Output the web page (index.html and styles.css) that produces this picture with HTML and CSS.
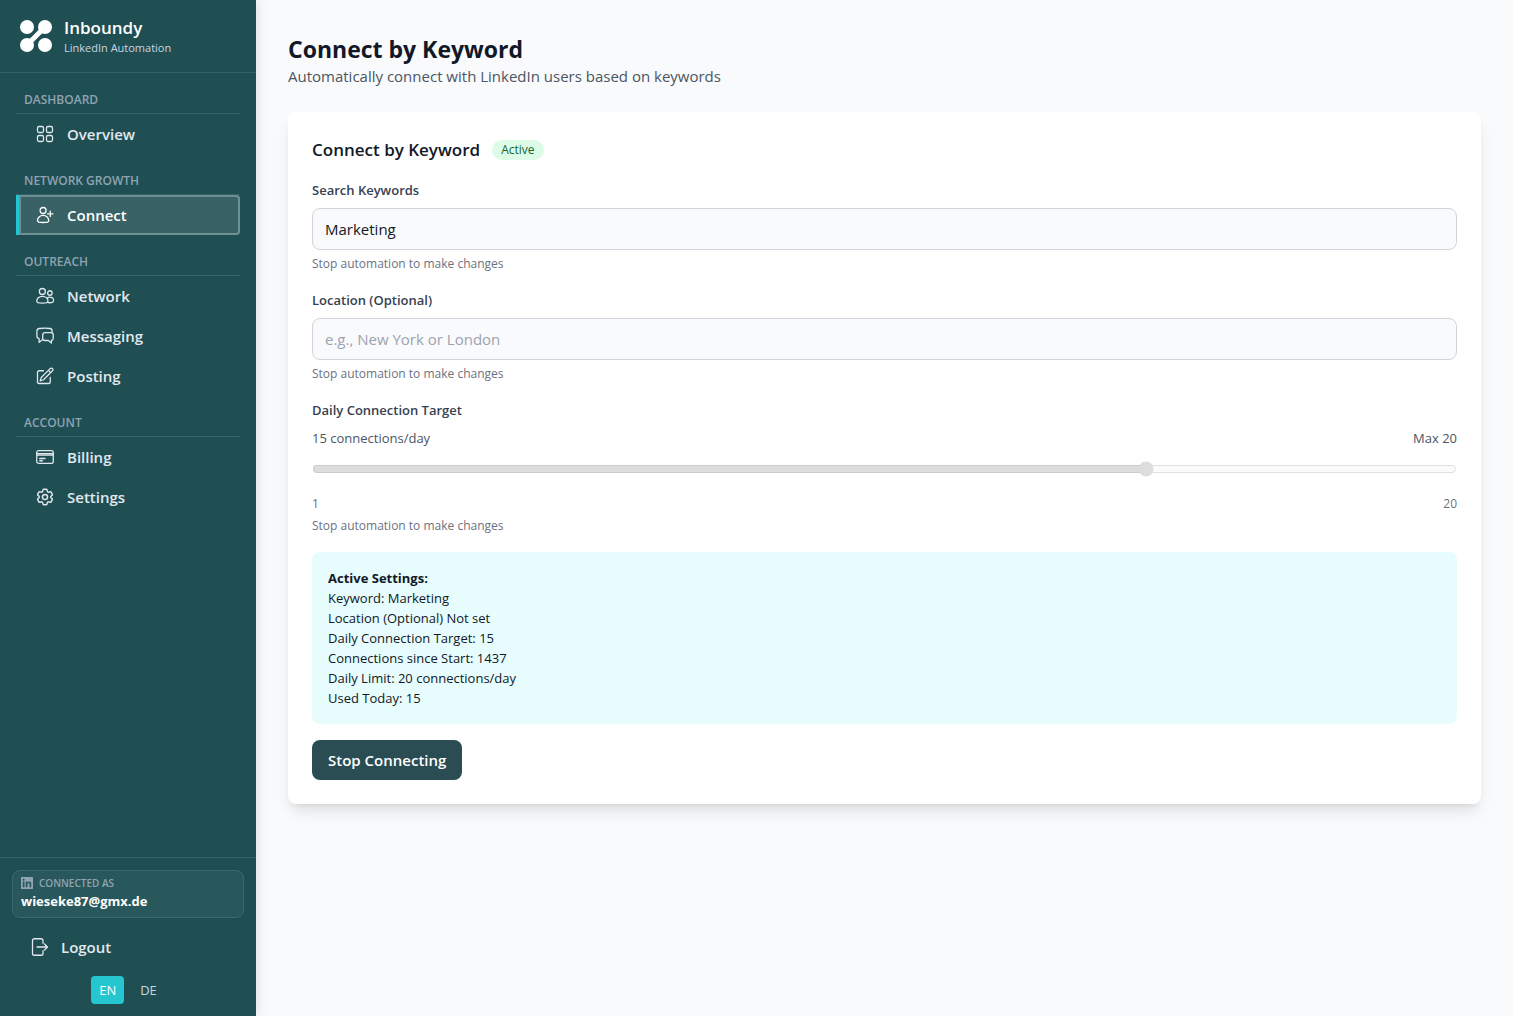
FILE: index.html
```html
<!DOCTYPE html>
<html lang="en">

<head>
  <meta charset="UTF-8">
  <meta name="viewport" content="width=device-width, initial-scale=1.0">
  <title>Inboundy - Connect by Keyword</title>
  <link rel="stylesheet" href="styles.css">
</head>

<body>
  <div class="app">
    <aside class="sidebar">
      <div class="brand">
        <svg class="brand-logo" viewBox="0 0 32 32" aria-hidden="true">
          <circle cx="7" cy="7" r="7" />
          <circle cx="25" cy="7" r="7" />
          <circle cx="7" cy="25" r="7" />
          <circle cx="25" cy="25" r="7" />
          <path d="M7 25 25 7" stroke="#fff" stroke-width="5" />
        </svg>
        <div>
          <div class="brand-name">Inboundy</div>
          <div class="brand-tagline">LinkedIn Automation</div>
        </div>
      </div>

      <!-- Navigation -->
      <nav class="nav">
        <section class="nav-group">
          <h2 class="nav-title">Dashboard</h2>
          <a class="nav-link" href="#overview">
            <svg class="icon" viewBox="0 0 24 24" aria-hidden="true">
              <rect x="2" y="2" width="8" height="8" rx="2" />
              <rect x="14" y="2" width="8" height="8" rx="2" />
              <rect x="2" y="14" width="8" height="8" rx="2" />
              <rect x="14" y="14" width="8" height="8" rx="2" />
            </svg>
            Overview
          </a>
        </section>

        <section class="nav-group">
          <h2 class="nav-title">Network Growth</h2>
          <a class="nav-link active" href="#connect">
            <svg class="icon" viewBox="0 0 24 24" aria-hidden="true">
              <circle cx="9.5" cy="6" r="4" />
              <path d="M9.5 12.5c-4.5 0-7.500 3.500-7.500 7 0 1.500 3 2.500 7.500 2.500s7.500-1 7.500-2.500c0-3.500-3-7-7.500-7z" />
              <path d="M19 7v7M15.500 10.500h7" />
            </svg>
            Connect
          </a>
        </section>

        <section class="nav-group">
          <h2 class="nav-title">Outreach</h2>
          <a class="nav-link" href="#network">
            <svg class="icon" viewBox="0 0 24 24" aria-hidden="true">
              <circle cx="8.500" cy="6" r="4" />
              <circle cx="18.500" cy="8" r="3" />
              <path d="M8.500 12.500c-4.500 0-7.500 3-7.500 6.500 0 1.500 3 2.500 7.500 2.500s7.500-1 7.500-2.500c0-3.500-3-6.500-7.500-6.500z" />
              <path d="M15 15c1-1 2-1.500 3.500-1.500 3 0 5 2 5 4.500 0 2-2.500 3-5 3-1.200 0-2.200-.1-3-.5" />
            </svg>
            Network
          </a>
          <a class="nav-link" href="#messaging">
            <svg class="icon" viewBox="0 0 24 24" aria-hidden="true">
              <path d="M21.500 7V5.500c0-1.800-1.300-3.300-3-3.500a60 60 0 0 0-14 0c-1.900.2-3.300 1.700-3.300 3.500v6.500c0 1.800 1.300 3.200 3 3.500v5l4.300-3.500" />
              <path d="M12 7.500h8c1.700 0 3 1.300 3 3v4.500c0 1.600-1 2.800-2.500 3v3.500L16.500 18H12c-1.700 0-3-1.300-3-3v-4.500c0-1.700 1.300-3 3-3z" />
            </svg>
            Messaging
          </a>
          <a class="nav-link" href="#posting">
            <svg class="icon" viewBox="0 0 24 24" aria-hidden="true">
              <path d="m17.500 3.500 1.500-1.500a2.100 2.100 0 0 1 3 3L10 17l-4.500 1.500L7 14 17.500 3.500zM16.500 4.500l3 3" />
              <path d="M19 14v5.500a2.500 2.500 0 0 1-2.500 2.500h-12A2.500 2.500 0 0 1 2 19.500v-12A2.500 2.500 0 0 1 4.500 5H10" />
            </svg>
            Posting
          </a>
        </section>

        <section class="nav-group">
          <h2 class="nav-title">Account</h2>
          <a class="nav-link" href="#billing">
            <svg class="icon" viewBox="0 0 24 24" aria-hidden="true">
              <rect x="1" y="3.500" width="22" height="17" rx="2.500" />
              <path d="M1 7.500h22M1 9.500h22M5 14h7M5 17h3.500" />
            </svg>
            Billing
          </a>
          <a class="nav-link" href="#settings">
            <svg class="icon" viewBox="1.500 1.500 21 21" aria-hidden="true">
              <path d="M9.594 3.940c.09-.542.56-.94 1.110-.94h2.593c.55 0 1.020.398 1.110.94l.213 1.281c.063.374.313.686.645.87.074.040.147.083.22.127.325.196.72.257 1.075.124l1.217-.456a1.125 1.125 0 0 1 1.370.49l1.296 2.247a1.125 1.125 0 0 1-.26 1.431l-1.003.827c-.293.241-.438.613-.43.992a7.723 7.723 0 0 1 0 .255c-.008.378.137.75.43.991l1.004.827c.424.35.534.955.26 1.430l-1.298 2.247a1.125 1.125 0 0 1-1.369.491l-1.217-.456c-.355-.133-.75-.072-1.076.124a6.470 6.470 0 0 1-.22.128c-.331.183-.581.495-.644.869l-.213 1.281c-.09.543-.56.940-1.110.940h-2.594c-.55 0-1.019-.398-1.110-.94l-.213-1.281c-.062-.374-.312-.686-.644-.87a6.520 6.520 0 0 1-.22-.127c-.325-.196-.72-.257-1.076-.124l-1.217.456a1.125 1.125 0 0 1-1.369-.49l-1.297-2.247a1.125 1.125 0 0 1 .26-1.431l1.004-.827c.292-.24.437-.613.43-.991a6.932 6.932 0 0 1 0-.255c.007-.38-.138-.751-.43-.992l-1.004-.827a1.125 1.125 0 0 1-.26-1.430l1.297-2.247a1.125 1.125 0 0 1 1.370-.491l1.216.456c.356.133.751.072 1.076-.124.072-.044.146-.086.22-.128.332-.183.582-.495.644-.869l.214-1.280z" />
              <circle cx="12" cy="12" r="3" />
            </svg>
            Settings
          </a>
        </section>
      </nav>

      <!-- Account footer -->
      <div class="sidebar-footer">
        <div class="account">
          <div class="account-label">
            <svg class="account-icon" viewBox="0 0 24 24" aria-hidden="true">
              <path fill-rule="evenodd" d="M1 0h22a1 1 0 0 1 1 1v22a1 1 0 0 1-1 1H1a1 1 0 0 1-1-1V1a1 1 0 0 1 1-1zM3.500 9v11.500h3.500V9zM5.300 3.300a2 2 0 1 0 0 4.100 2 2 0 0 0 0-4.100zM9.500 9v11.500H13V15c0-3.700 4-3.500 4 0v5.500h3.500v-7c0-5.500-5.500-5.500-7.500-2.800V9z" />
            </svg>
            Connected as
          </div>
          <div class="account-email">wieseke87@gmx.de</div>
        </div>
        <button class="logout" type="button">
          <svg class="icon" viewBox="0 0 24 24" aria-hidden="true">
            <path d="M16 7V3.500A2.500 2.500 0 0 0 13.500 1h-9A2.500 2.500 0 0 0 2 3.500v17A2.500 2.500 0 0 0 4.500 23h9a2.500 2.500 0 0 0 2.500-2.500V17" />
            <path d="M8 12h14M18 8l4 4-4 4" />
          </svg>
          Logout
        </button>
        <div class="languages">
          <button class="language selected" type="button">EN</button>
          <button class="language" type="button">DE</button>
        </div>
      </div>
    </aside>

    <main class="content">
      <header class="page-header">
        <h1>Connect by Keyword</h1>
        <p>Automatically connect with LinkedIn users based on keywords</p>
      </header>

      <form class="card">
        <div class="card-header">
          <h2>Connect by Keyword</h2>
          <span class="badge">Active</span>
        </div>

        <div class="field">
          <label for="keywords">Search Keywords</label>
          <input class="text-input" id="keywords" type="text" value="Marketing" disabled>
          <p class="hint">Stop automation to make changes</p>
        </div>

        <div class="field">
          <label for="location">Location (Optional)</label>
          <input class="text-input" id="location" type="text" placeholder="e.g., New York or London" disabled>
          <p class="hint">Stop automation to make changes</p>
        </div>

        <div class="field">
          <label for="target">Daily Connection Target</label>
          <div class="range-values">
            <span>15 connections/day</span>
            <span>Max 20</span>
          </div>
          <input class="range" id="target" type="range" min="1" max="20" step="any" value="14.9" disabled>
          <div class="range-limits">
            <span>1</span>
            <span>20</span>
          </div>
          <p class="hint">Stop automation to make changes</p>
        </div>

        <div class="summary">
          <h3>Active Settings:</h3>
          <p>Keyword: Marketing</p>
          <p>Location (Optional) Not set</p>
          <p>Daily Connection Target: 15</p>
          <p>Connections since Start: 1437</p>
          <p>Daily Limit: 20 connections/day</p>
          <p>Used Today: 15</p>
        </div>

        <button class="stop-btn" type="button">Stop Connecting</button>
      </form>
    </main>
  </div>
</body>

</html>
```
FILE: styles.css
```css
* {
  margin: 0;
  padding: 0;
  box-sizing: border-box;
}

body {
  font-family: 'Segoe UI', 'Open Sans', 'Noto Sans', sans-serif;
  font-size: 15px;
  line-height: 24px;
  color: #111827;
  background-color: #f9fafb;
}

button,
input {
  font: inherit;
}

.app {
  display: flex;
  min-height: 100vh;
}

/* Sidebar */
.sidebar {
  display: flex;
  flex-direction: column;
  flex: none;
  width: 256px;
  background-color: #1f4f52;
  box-shadow: 2px 0 10px rgba(0, 0, 0, 0.1);
  color: #e2e8f0;
}

.brand {
  display: flex;
  align-items: center;
  gap: 12px;
  padding: 16px 20px;
  border-bottom: 1px solid #356365;
}

.brand-logo {
  width: 32px;
  height: 32px;
  fill: #fff;
}

.brand-name {
  font-size: 17px;
  font-weight: 600;
  color: #fff;
}

.brand-tagline {
  font-size: 11px;
  line-height: 16px;
  color: #cbd5e1;
}

.nav {
  flex: 1;
  padding: 16px;
}

.nav-group {
  margin-bottom: 16px;
}

.nav-title {
  padding: 1px 8px 3px;
  border-bottom: 1px solid #34646b;
  font-size: 12px;
  font-weight: 600;
  line-height: 20px;
  text-transform: uppercase;
  color: #8fa3b3;
}

.nav-link {
  display: flex;
  align-items: center;
  gap: 13px;
  height: 40px;
  padding: 0 20px;
  font-weight: 600;
  color: #e2e8f0;
  text-decoration: none;
}

.nav-link.active {
  padding-left: 17px;
  border-left: 3px solid #26c6d0;
  border-radius: 0 4px 4px 0;
  background-color: #386265;
  box-shadow: inset 0 0 0 2px #6f9092;
  color: #fff;
}

.icon {
  flex: none;
  width: 18px;
  height: 18px;
  fill: none;
  stroke: currentColor;
  stroke-width: 1.7;
  stroke-linecap: round;
  stroke-linejoin: round;
}

.sidebar-footer {
  padding: 12px;
  border-top: 1px solid #356365;
}

.account {
  padding: 4px 8px 6px;
  border: 1px solid #3a686c;
  border-radius: 8px;
  background-color: #29585c;
}

.account-label {
  display: flex;
  align-items: center;
  gap: 6px;
  font-size: 10px;
  font-weight: 600;
  line-height: 16px;
  text-transform: uppercase;
  color: #8fa3b3;
}

.account-icon {
  width: 12px;
  height: 12px;
  fill: currentColor;
}

.account-email {
  font-size: 13px;
  font-weight: 700;
  line-height: 20px;
  color: #fff;
}

.logout {
  display: flex;
  align-items: center;
  gap: 12px;
  width: 100%;
  height: 40px;
  margin: 9px 0;
  padding: 0 19px;
  border: none;
  background: none;
  font-weight: 600;
  color: #e2e8f0;
}

.languages {
  display: flex;
  justify-content: center;
  gap: 8px;
}

.language {
  height: 28px;
  padding: 0 8px;
  border: none;
  border-radius: 4px;
  background: none;
  font-size: 13px;
  color: #cbd5e1;
}

.language.selected {
  background-color: #26c6d0;
  font-weight: 500;
  color: #fff;
}

/* Page */
.content {
  flex: 1;
  min-width: 0;
  padding: 32px;
}

.page-header {
  margin-bottom: 26px;
}

.page-header h1 {
  font-size: 23px;
  font-weight: 700;
  line-height: 34px;
}

.page-header p {
  line-height: 20px;
  color: #4b5563;
}

.card {
  padding: 24px;
  border-radius: 8px;
  background-color: #fff;
  box-shadow: 0 10px 15px -3px rgba(0, 0, 0, 0.1), 0 4px 6px -4px rgba(0, 0, 0, 0.1);
}

.card-header {
  display: flex;
  align-items: center;
  gap: 12px;
  margin-bottom: 16px;
}

.card-header h2 {
  font-size: 17px;
  font-weight: 600;
  line-height: 28px;
}

.badge {
  padding: 2px 9px;
  border-radius: 10px;
  background-color: #dcfce7;
  font-size: 12px;
  font-weight: 500;
  line-height: 16px;
  color: #166534;
}

.field {
  margin-bottom: 16px;
}

.field label {
  display: block;
  margin-bottom: 8px;
  font-size: 13px;
  font-weight: 600;
  line-height: 20px;
  color: #374151;
}

.text-input {
  width: 100%;
  height: 42px;
  padding: 0 12px;
  border: 1px solid #d1d5db;
  border-radius: 8px;
  background-color: #f9fafb;
  color: #111827;
}

.text-input::placeholder {
  color: #9ca3af;
}

.hint {
  margin-top: 4px;
  font-size: 12px;
  line-height: 20px;
  color: #6b7280;
}

/* Slider */
.range-values,
.range-limits {
  display: flex;
  justify-content: space-between;
  font-size: 13px;
  line-height: 20px;
  color: #4b5563;
}

.range {
  display: block;
  width: 100%;
  height: 16px;
  margin: 13px 0 19px;
  opacity: 0.65;
}

.range-limits {
  font-size: 12px;
  line-height: 16px;
  color: #6b7280;
}

.summary {
  margin-bottom: 16px;
  padding: 16px;
  border-radius: 8px;
  background-color: #e6fcfd;
  font-size: 13px;
  line-height: 20px;
}

.summary h3 {
  font-size: 13px;
  font-weight: 700;
}

.stop-btn {
  display: block;
  height: 40px;
  padding: 0 16px;
  border: none;
  border-radius: 8px;
  background-color: #2a4c53;
  font-weight: 600;
  color: #fff;
}
```
